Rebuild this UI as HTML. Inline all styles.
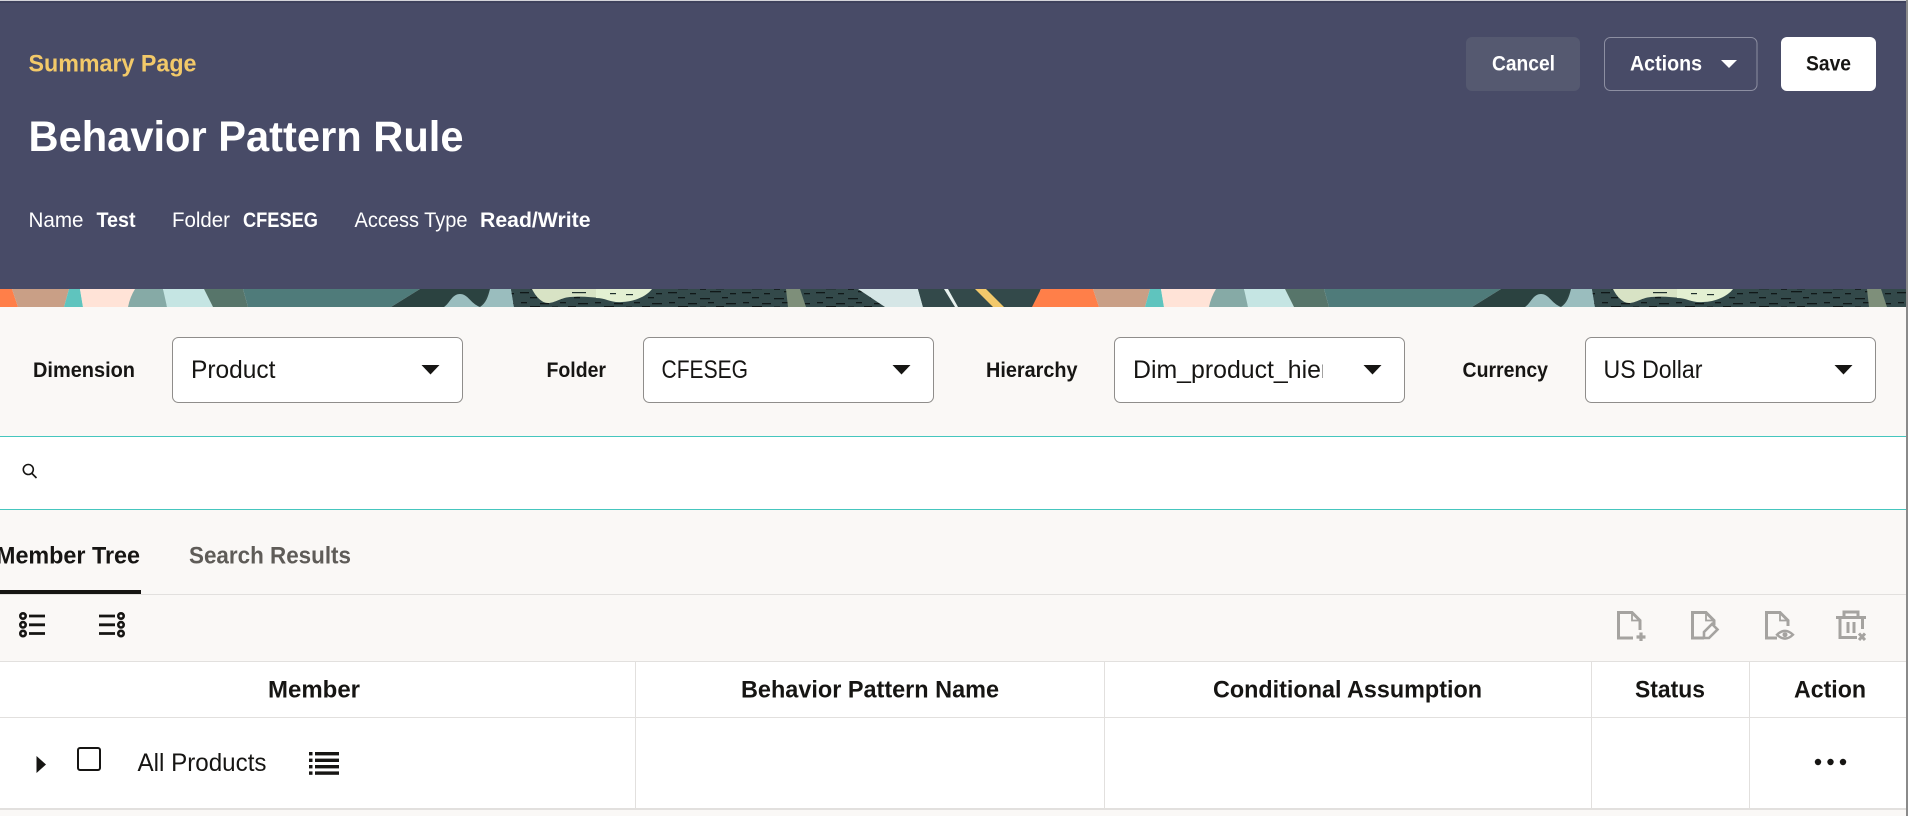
<!DOCTYPE html>
<html lang="en">
<head>
<meta charset="utf-8">
<title>Behavior Pattern Rule</title>
<style>
html,body{margin:0;padding:0;width:1908px;height:816px;overflow:hidden;background:#faf8f6}
svg{display:block}
text{font-family:"Liberation Sans",sans-serif;fill:#161513}
.b{font-weight:700}
.w{fill:#fff}
.g{fill:none;stroke:#a5a3a0;stroke-width:3}
.i{fill:none;stroke:#161513}
</style>
</head>
<body>
<svg xmlns="http://www.w3.org/2000/svg" width="1908" height="816" viewBox="0 0 1908 816">
<defs>
<pattern id="dash" x="0" y="289" width="74" height="18" patternUnits="userSpaceOnUse">
<g fill="#101818">
<rect x="2" y="2" width="9" height="1.3"/><rect x="24" y="3" width="6" height="1.3"/><rect x="44" y="1" width="11" height="1.3"/><rect x="64" y="3" width="6" height="1.3"/>
<rect x="12" y="7" width="7" height="1.3"/><rect x="34" y="8" width="10" height="1.3"/><rect x="56" y="7" width="6" height="1.3"/>
<rect x="3" y="12" width="6" height="1.3"/><rect x="22" y="13" width="9" height="1.3"/><rect x="42" y="12" width="6" height="1.3"/><rect x="60" y="13" width="10" height="1.3"/>
<rect x="12" y="16" width="10" height="1.3"/><rect x="34" y="16.5" width="6" height="1.3"/><rect x="50" y="16" width="8" height="1.3"/>
</g>
</pattern>
<g id="art">
<rect x="420" y="0" width="620" height="18" fill="#2f4644"/>
<polygon points="-40,0 12,0 18,18 -49,18" fill="#ff7f49"/>
<polygon points="12,0 69,0 64,18 18,18" fill="#c99f86"/>
<polygon points="69,0 80,0 83,18 64,18" fill="#5fc4be"/>
<polygon points="80,0 135,0 128,18 83,18" fill="#ffe3d7"/>
<path d="M135 0H163Q166 9 167 18H128Q130 8 135 0Z" fill="#86aaa6"/>
<polygon points="163,0 204,0 213,18 167,18" fill="#c5e5e3"/>
<polygon points="204,0 243,0 248,18 213,18" fill="#57756a"/>
<polygon points="243,0 420,0 391,18 248,18" fill="#4f7b7a"/>
<polygon points="420,0 490,0 480,18 391,18" fill="#2b4240"/>
<path d="M444 18C450 14 452 5 460 5C468 5 470 14 480 18Z" fill="#9abdbe"/>
<path d="M490 0C488 8 486 14 480 18H514L511 0Z" fill="#9abdbe"/>
<polygon points="511,0 858,0 885,18 514,18" fill="#33494a"/>
<polygon points="511,0 858,0 885,18 514,18" fill="url(#dash)"/>
<polygon points="786,0 800,0 806,18 788,18" fill="#7e8f7a"/>
<path d="M532 0C536 8 542 14 548 14C555 14 560 9 570 8C582 7 590 8 600 9V0Z" fill="#d8e3c5"/>
<path d="M596 0V9C606 9 611 14 622 13C634 13 647 7 652 0Z" fill="#e3f0d2"/>
<g fill="#20302e"><rect x="572" y="3" width="14" height="1.2"/><rect x="610" y="4" width="6" height="1.2"/><rect x="626" y="5" width="7" height="1.2"/></g>
<polygon points="858,0 918,0 923,18 885,18" fill="#d5e6e6"/>
<polygon points="918,0 1041,0 1032,18 923,18" fill="#33494a"/>
<polygon points="944,0 948,0 958,18 955,18" fill="#e6f0ee"/>
<polygon points="975,0 986,0 1004,18 993,18" fill="#f3c96b"/>
</g>
<clipPath id="band"><rect x="0" y="0" width="1906" height="18"/></clipPath>
<clipPath id="hier"><rect x="1130" y="340" width="193" height="60"/></clipPath>
</defs>

<!-- page -->
<rect width="1908" height="816" fill="#faf8f6"/>

<!-- header -->
<rect width="1908" height="289" fill="#484b67"/>
<rect width="1908" height="1" fill="#d4d4da"/>
<rect y="1" width="1908" height="2" fill="#3e415c"/>
<text class="b" x="28.5" y="71.5" font-size="24" style="fill:#f2c969" textLength="168" lengthAdjust="spacingAndGlyphs">Summary Page</text>
<text class="b w" x="28.5" y="151" font-size="43" textLength="435" lengthAdjust="spacingAndGlyphs">Behavior Pattern Rule</text>
<text class="w" x="28.5" y="227" font-size="21" textLength="55" lengthAdjust="spacingAndGlyphs">Name</text>
<text class="b w" x="96.5" y="227" font-size="21" textLength="39" lengthAdjust="spacingAndGlyphs">Test</text>
<text class="w" x="172" y="227" font-size="21" textLength="58" lengthAdjust="spacingAndGlyphs">Folder</text>
<text class="b w" x="243" y="227" font-size="21" textLength="75" lengthAdjust="spacingAndGlyphs">CFESEG</text>
<text class="w" x="354.5" y="227" font-size="21" textLength="113" lengthAdjust="spacingAndGlyphs">Access Type</text>
<text class="b w" x="480" y="227" font-size="21" textLength="110.5" lengthAdjust="spacingAndGlyphs">Read/Write</text>

<!-- header buttons -->
<rect x="1466" y="37" width="114" height="54" rx="6" fill="#555970"/>
<text class="b w" x="1492" y="70.5" font-size="21" textLength="63" lengthAdjust="spacingAndGlyphs">Cancel</text>
<rect x="1604.5" y="37.5" width="152.5" height="53" rx="6" fill="none" stroke="#8d8fa2"/>
<text class="b w" x="1630" y="70.5" font-size="21" textLength="72" lengthAdjust="spacingAndGlyphs">Actions</text>
<polygon points="1721,60 1737,60 1729,68" fill="#fff"/>
<rect x="1781" y="37" width="95" height="54" rx="6" fill="#fff"/>
<text class="b" x="1806" y="70.5" font-size="21" textLength="45" lengthAdjust="spacingAndGlyphs">Save</text>

<!-- pattern strip -->
<g transform="translate(0,289)" clip-path="url(#band)">
<use href="#art"/>
<use href="#art" x="1081"/>
</g>

<!-- filter row -->
<text class="b" x="33" y="377" font-size="21" textLength="102" lengthAdjust="spacingAndGlyphs">Dimension</text>
<rect x="172.5" y="337.5" width="290" height="65" rx="6" fill="#fff" stroke="#8f8d8b"/>
<text x="191" y="378" font-size="25" textLength="84.5" lengthAdjust="spacingAndGlyphs">Product</text>
<polygon points="421.5,365 439.5,365 430.5,374.5" fill="#161513"/>

<text class="b" x="546.5" y="377" font-size="21" textLength="59.5" lengthAdjust="spacingAndGlyphs">Folder</text>
<rect x="643.5" y="337.5" width="290" height="65" rx="6" fill="#fff" stroke="#8f8d8b"/>
<text x="661.5" y="378" font-size="25" textLength="86.5" lengthAdjust="spacingAndGlyphs">CFESEG</text>
<polygon points="892.5,365 910.5,365 901.5,374.5" fill="#161513"/>

<text class="b" x="986" y="377" font-size="21" textLength="91.5" lengthAdjust="spacingAndGlyphs">Hierarchy</text>
<rect x="1114.5" y="337.5" width="290" height="65" rx="6" fill="#fff" stroke="#8f8d8b"/>
<text x="1133" y="378" font-size="25" textLength="257" lengthAdjust="spacingAndGlyphs" clip-path="url(#hier)">Dim_product_hierarchy</text>
<polygon points="1363.5,365 1381.5,365 1372.5,374.5" fill="#161513"/>

<text class="b" x="1462.5" y="377" font-size="21" textLength="85.5" lengthAdjust="spacingAndGlyphs">Currency</text>
<rect x="1585.5" y="337.5" width="290" height="65" rx="6" fill="#fff" stroke="#8f8d8b"/>
<text x="1603.5" y="378" font-size="25" textLength="99" lengthAdjust="spacingAndGlyphs">US Dollar</text>
<polygon points="1834.5,365 1852.5,365 1843.5,374.5" fill="#161513"/>

<!-- search band -->
<rect x="0" y="436" width="1906" height="74" fill="#fff"/>
<rect x="0" y="436" width="1906" height="1" fill="#45c6be"/>
<rect x="0" y="509" width="1906" height="1" fill="#45c6be"/>
<circle cx="28.3" cy="469.5" r="5" fill="none" stroke="#161513" stroke-width="1.6"/>
<line x1="32" y1="473.5" x2="36.5" y2="478" stroke="#161513" stroke-width="1.6"/>

<!-- tabs -->
<text class="b" x="-4" y="563.5" font-size="24" textLength="144" lengthAdjust="spacingAndGlyphs">Member Tree</text>
<text class="b" x="189" y="563.5" font-size="24" style="fill:#5f5c58" textLength="162" lengthAdjust="spacingAndGlyphs">Search Results</text>
<rect x="0" y="594" width="1906" height="1" fill="#e2e0de"/>
<rect x="0" y="590" width="141" height="4" fill="#161513"/>

<!-- toolbar left -->
<g class="i" stroke-width="2.6">
<circle cx="23" cy="616" r="2.7"/><circle cx="23" cy="624.8" r="2.7"/><circle cx="23" cy="633.5" r="2.7"/>
<circle cx="121" cy="616" r="2.7"/><circle cx="121" cy="624.8" r="2.7"/><circle cx="121" cy="633.5" r="2.7"/>
</g>
<g class="i" stroke-width="2.8">
<path d="M29 616H45M29 624.8H45M29 633.5H45"/>
<path d="M99 616H115M99 624.8H115M99 633.5H115"/>
</g>

<!-- toolbar right -->
<g class="g">
<path d="M1633 638H1618.5V612.5H1632L1640 620.5V630"/>
<path d="M1632 613V620.5H1639.5" stroke-width="1.8"/>
<path d="M1641 632.5V641M1636.5 637H1645.5" stroke-width="3.2"/>
<path d="M1704 638H1692.5V612.5H1706L1714 620.5V625"/>
<path d="M1706 613V620.5H1713.5" stroke-width="1.8"/>
<path d="M1704 632L1712 624L1717.5 629.5L1709 638H1704Z" stroke-width="2.6"/>
<path d="M1777 638H1766.5V612.5H1780L1788 620.5V626"/>
<path d="M1780 613V620.5H1787.5" stroke-width="1.8"/>
<path d="M1777 634.7Q1785 627 1793 634.7Q1785 642.5 1777 634.7Z" stroke-width="2.4"/>
<circle cx="1785" cy="634.7" r="1.7" fill="#a5a3a0" stroke-width="1.6"/>
<path d="M1836 617.5H1866M1844 617V612H1858V617"/>
<path d="M1840 618V637.5H1857M1862.5 618V629"/>
<path d="M1848 622V633M1854 622V633"/>
<path d="M1859 633.5L1865 640M1865 633.5L1859 640" stroke-width="3"/>
</g>

<!-- table -->
<rect x="0" y="661" width="1906" height="147" fill="#fff"/>
<rect x="0" y="661" width="1906" height="1" fill="#e2e0de"/>
<rect x="0" y="717" width="1906" height="1" fill="#e2e0de"/>
<rect x="0" y="808" width="1906" height="2" fill="#e2e0de"/>
<g fill="#e2e0de">
<rect x="635" y="661" width="1" height="147"/>
<rect x="1104" y="661" width="1" height="147"/>
<rect x="1591" y="661" width="1" height="147"/>
<rect x="1749" y="661" width="1" height="147"/>
</g>
<text class="b" x="268" y="697.5" font-size="24" textLength="92" lengthAdjust="spacingAndGlyphs">Member</text>
<text class="b" x="741" y="697.5" font-size="24" textLength="258" lengthAdjust="spacingAndGlyphs">Behavior Pattern Name</text>
<text class="b" x="1213" y="697.5" font-size="24" textLength="269" lengthAdjust="spacingAndGlyphs">Conditional Assumption</text>
<text class="b" x="1635" y="697.5" font-size="24" textLength="70" lengthAdjust="spacingAndGlyphs">Status</text>
<text class="b" x="1794" y="697.5" font-size="24" textLength="72" lengthAdjust="spacingAndGlyphs">Action</text>

<polygon points="36.5,756 46,764.5 36.5,773" fill="#161513"/>
<rect x="78" y="748" width="22" height="22" rx="2" fill="#fff" stroke="#161513" stroke-width="2"/>
<text x="137.5" y="771" font-size="25" textLength="129" lengthAdjust="spacingAndGlyphs">All Products</text>
<g fill="#161513">
<rect x="309" y="752" width="3.5" height="3.4"/><rect x="315" y="752" width="24" height="3.4"/>
<rect x="309" y="758.6" width="3.5" height="3.4"/><rect x="315" y="758.6" width="24" height="3.4"/>
<rect x="309" y="765" width="3.5" height="3.4"/><rect x="315" y="765" width="24" height="3.4"/>
<rect x="309" y="771.4" width="3.5" height="3.4"/><rect x="315" y="771.4" width="24" height="3.4"/>
<circle cx="1818" cy="762" r="3.2"/><circle cx="1830.5" cy="762" r="3.2"/><circle cx="1843" cy="762" r="3.2"/>
</g>

<!-- scrollbar edge -->
<rect x="1906" y="0" width="2" height="816" fill="#8a8a8a"/>
</svg>
</body>
</html>
